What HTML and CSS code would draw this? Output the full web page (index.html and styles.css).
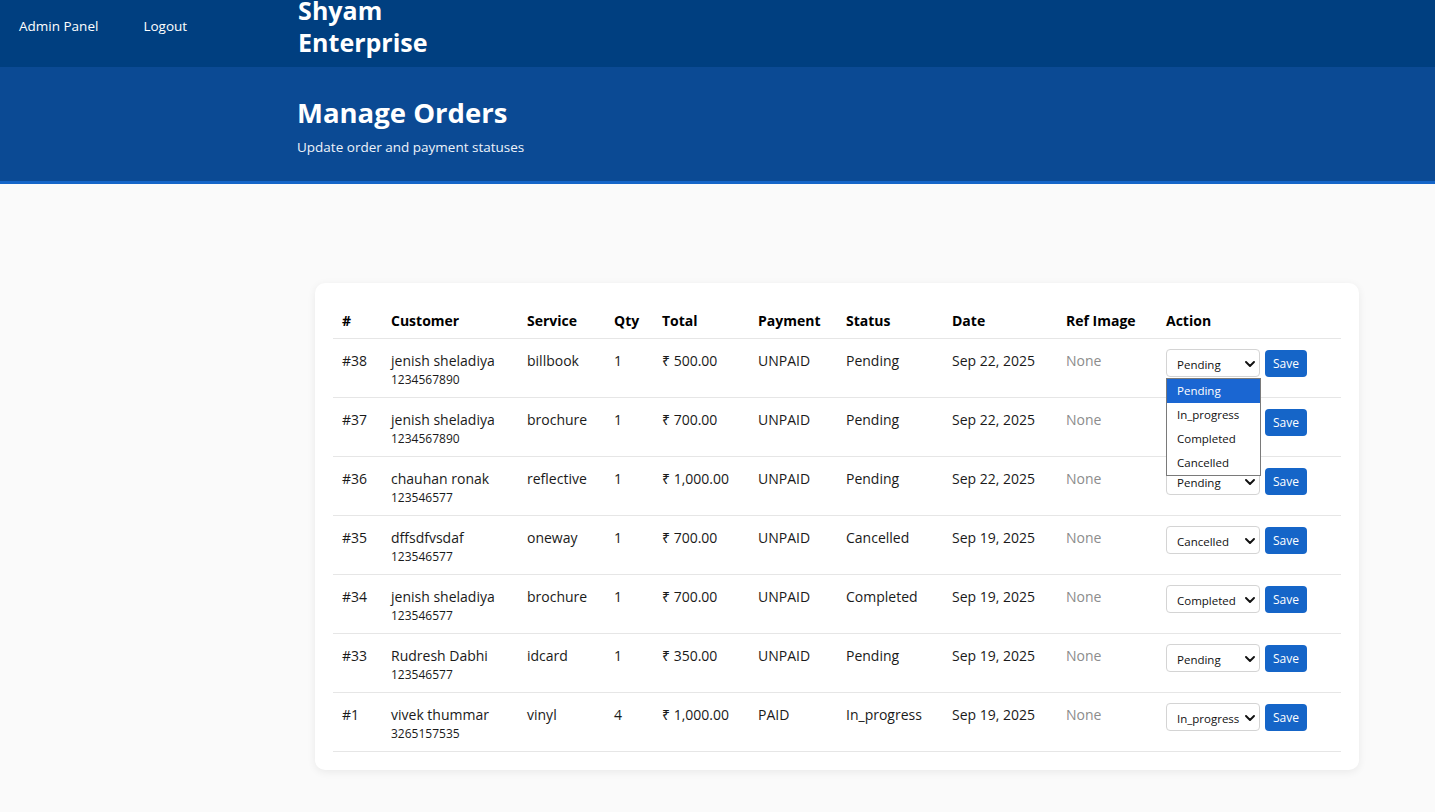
FILE: index.html
```html
<!DOCTYPE html>
<html lang="en">
<head>
<meta charset="utf-8">
<title>Manage Orders</title>
<link rel="stylesheet" href="styles.css">
</head>
<body>
<nav class="navbar">
  <a class="nav-link nav-admin" href="#">Admin Panel</a>
  <a class="nav-link nav-logout" href="#">Logout</a>
  <div class="brand">Shyam Enterprise</div>
</nav>
<header class="hero">
  <h1 class="hero-title">Manage Orders</h1>
  <p class="hero-sub">Update order and payment statuses</p>
</header>
<main class="main">
  <section class="card">
    <table class="orders">
      <colgroup>
        <col style="width:49px"><col style="width:136px"><col style="width:87px"><col style="width:48px"><col style="width:96px"><col style="width:88px"><col style="width:106px"><col style="width:114px"><col style="width:100px"><col style="width:184px">
      </colgroup>
      <thead>
        <tr><th>#</th><th>Customer</th><th>Service</th><th>Qty</th><th>Total</th><th>Payment</th><th>Status</th><th>Date</th><th>Ref Image</th><th>Action</th></tr>
      </thead>
      <tbody>
        <tr>
          <td>#38</td><td>jenish sheladiya<span class="phone">1234567890</span></td><td>billbook</td><td>1</td><td>₹ 500.00</td><td>UNPAID</td><td>Pending</td><td>Sep 22, 2025</td><td class="muted">None</td>
          <td><div class="action">
            <div class="select-wrap"><select class="status-select"><option selected>Pending</option><option>In_progress</option><option>Completed</option><option>Cancelled</option></select><svg class="chev" viewBox="0 0 10 6" width="10" height="6"><path d="M1 1l4 4 4-4" fill="none" stroke="#111" stroke-width="1.9" stroke-linecap="round" stroke-linejoin="round"/></svg>
              <ul class="menu"><li class="active">Pending</li><li>In_progress</li><li>Completed</li><li>Cancelled</li></ul>
            </div>
            <button class="save">Save</button></div></td>
        </tr>
        <tr>
          <td>#37</td><td>jenish sheladiya<span class="phone">1234567890</span></td><td>brochure</td><td>1</td><td>₹ 700.00</td><td>UNPAID</td><td>Pending</td><td>Sep 22, 2025</td><td class="muted">None</td>
          <td><div class="action">
            <div class="select-wrap"><select class="status-select"><option selected>Pending</option><option>In_progress</option><option>Completed</option><option>Cancelled</option></select><svg class="chev" viewBox="0 0 10 6" width="10" height="6"><path d="M1 1l4 4 4-4" fill="none" stroke="#111" stroke-width="1.9" stroke-linecap="round" stroke-linejoin="round"/></svg></div>
            <button class="save">Save</button></div></td>
        </tr>
        <tr>
          <td>#36</td><td>chauhan ronak<span class="phone">123546577</span></td><td>reflective</td><td>1</td><td>₹ 1,000.00</td><td>UNPAID</td><td>Pending</td><td>Sep 22, 2025</td><td class="muted">None</td>
          <td><div class="action">
            <div class="select-wrap"><select class="status-select"><option selected>Pending</option><option>In_progress</option><option>Completed</option><option>Cancelled</option></select><svg class="chev" viewBox="0 0 10 6" width="10" height="6"><path d="M1 1l4 4 4-4" fill="none" stroke="#111" stroke-width="1.9" stroke-linecap="round" stroke-linejoin="round"/></svg></div>
            <button class="save">Save</button></div></td>
        </tr>
        <tr>
          <td>#35</td><td>dffsdfvsdaf<span class="phone">123546577</span></td><td>oneway</td><td>1</td><td>₹ 700.00</td><td>UNPAID</td><td>Cancelled</td><td>Sep 19, 2025</td><td class="muted">None</td>
          <td><div class="action">
            <div class="select-wrap"><select class="status-select"><option>Pending</option><option>In_progress</option><option>Completed</option><option selected>Cancelled</option></select><svg class="chev" viewBox="0 0 10 6" width="10" height="6"><path d="M1 1l4 4 4-4" fill="none" stroke="#111" stroke-width="1.9" stroke-linecap="round" stroke-linejoin="round"/></svg></div>
            <button class="save">Save</button></div></td>
        </tr>
        <tr>
          <td>#34</td><td>jenish sheladiya<span class="phone">123546577</span></td><td>brochure</td><td>1</td><td>₹ 700.00</td><td>UNPAID</td><td>Completed</td><td>Sep 19, 2025</td><td class="muted">None</td>
          <td><div class="action">
            <div class="select-wrap"><select class="status-select"><option>Pending</option><option>In_progress</option><option selected>Completed</option><option>Cancelled</option></select><svg class="chev" viewBox="0 0 10 6" width="10" height="6"><path d="M1 1l4 4 4-4" fill="none" stroke="#111" stroke-width="1.9" stroke-linecap="round" stroke-linejoin="round"/></svg></div>
            <button class="save">Save</button></div></td>
        </tr>
        <tr>
          <td>#33</td><td>Rudresh Dabhi<span class="phone">123546577</span></td><td>idcard</td><td>1</td><td>₹ 350.00</td><td>UNPAID</td><td>Pending</td><td>Sep 19, 2025</td><td class="muted">None</td>
          <td><div class="action">
            <div class="select-wrap"><select class="status-select"><option selected>Pending</option><option>In_progress</option><option>Completed</option><option>Cancelled</option></select><svg class="chev" viewBox="0 0 10 6" width="10" height="6"><path d="M1 1l4 4 4-4" fill="none" stroke="#111" stroke-width="1.9" stroke-linecap="round" stroke-linejoin="round"/></svg></div>
            <button class="save">Save</button></div></td>
        </tr>
        <tr>
          <td>#1</td><td>vivek thummar<span class="phone">3265157535</span></td><td>vinyl</td><td>4</td><td>₹ 1,000.00</td><td>PAID</td><td>In_progress</td><td>Sep 19, 2025</td><td class="muted">None</td>
          <td><div class="action">
            <div class="select-wrap"><select class="status-select"><option>Pending</option><option selected>In_progress</option><option>Completed</option><option>Cancelled</option></select><svg class="chev" viewBox="0 0 10 6" width="10" height="6"><path d="M1 1l4 4 4-4" fill="none" stroke="#111" stroke-width="1.9" stroke-linecap="round" stroke-linejoin="round"/></svg></div>
            <button class="save">Save</button></div></td>
        </tr>
      </tbody>
    </table>
  </section>
</main>
</body>
</html>
```

FILE: styles.css
```css
* { box-sizing: border-box; }
html, body { margin: 0; padding: 0; }
body {
  background: #fafafa;
  font-family: "Open Sans", "Noto Sans", "Liberation Sans", sans-serif;
  color: #212529;
  font-size: 14px;
}
.navbar {
  height: 67px;
  background: #003f80;
  display: flex;
  align-items: flex-start;
  padding-left: 19px;
  overflow: hidden;
}
.nav-link {
  color: #fff;
  text-decoration: none;
  font-size: 13.5px;
  line-height: 20px;
  margin-top: 16px;
}
.nav-admin { margin-right: 45px; }
.brand {
  margin-left: 111px;
  margin-top: -6px;
  width: 150px;
  color: #fff;
  font-weight: 700;
  font-size: 25px;
  line-height: 32px;
}
.hero {
  background: #0b4a94;
  border-bottom: 3px solid #1565c8;
  height: 117px;
  padding: 28px 0 0 297px;
  color: #fff;
}
.hero-title {
  margin: 0;
  font-size: 27.5px;
  line-height: 36px;
  font-weight: 700;
}
.hero-sub {
  margin: 6px 0 0;
  font-size: 13.5px;
  line-height: 20px;
  color: #eef3fa;
}
.main {
  padding: 99px 76px 40px 315px;
}
.card {
  background: #fff;
  border-radius: 10px;
  box-shadow: 0 2px 8px rgba(0,0,0,0.07);
  padding: 18px;
}
.orders {
  width: 100%;
  border-collapse: collapse;
  table-layout: fixed;
}
.orders th {
  text-align: left;
  font-weight: 700;
  color: #000;
  padding: 10px 9px 7px;
  line-height: 20px;
  border-bottom: 1px solid #e6e6e6;
}
.orders td {
  vertical-align: top;
  padding: 12px 9px 8px;
  line-height: 20px;
  border-bottom: 1px solid #e6e6e6;
  color: #1a1a1a;
}
.orders td.muted { color: #8c8c8c; }
.phone {
  display: block;
  font-size: 12px;
  line-height: 18px;
}
.action {
  display: flex;
  align-items: flex-start;
  gap: 5px;
  margin-top: -2px;
}
.select-wrap {
  position: relative;
  width: 94px;
  height: 28px;
}
.status-select {
  appearance: none;
  -webkit-appearance: none;
  width: 94px;
  height: 28px;
  border: 1px solid #d4d4d4;
  border-radius: 4px;
  background: #fff;
  font-family: inherit;
  font-size: 11.5px;
  color: #111;
  padding: 2px 14px 0 10px;
}
.chev {
  position: absolute;
  right: 5px;
  top: 12px;
  pointer-events: none;
}
.save {
  height: 27px;
  width: 42px;
  margin-top: 1px;
  border: 0;
  border-radius: 4px;
  background: #1565c8;
  color: #fff;
  font-family: inherit;
  font-size: 12px;
  padding: 0;
}
.menu {
  position: absolute;
  left: 0;
  top: 29px;
  width: 95px;
  margin: 0;
  padding: 0;
  list-style: none;
  background: #fff;
  border: 1px solid #7a7a7a;
  z-index: 5;
}
.menu li {
  height: 24px;
  line-height: 24px;
  padding-left: 10px;
  font-size: 11.5px;
  color: #111;
}
.menu li.active {
  background: #1a66d2;
  color: #fff;
}
```
